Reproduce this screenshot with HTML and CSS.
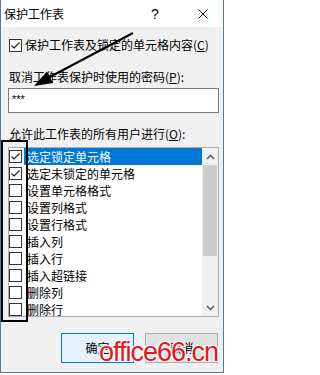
FILE: index.html
```html
<!DOCTYPE html>
<html lang="zh-CN">
<head>
<meta charset="utf-8">
<title>保护工作表</title>
<link rel="stylesheet" href="styles.css">
</head>
<body>
<div class="dialog">
  <div class="titlebar">
    <span class="title">保护工作表</span>
    <span class="tb-help">?</span>
    <span class="tb-close"><svg width="10" height="10" viewBox="0 0 10 10"><path d="M0.5 0.5 L9.5 9.5 M9.5 0.5 L0.5 9.5" stroke="#111" stroke-width="1" fill="none"/></svg></span>
  </div>
  <div class="body">
    <div class="check-row">
      <span class="cb"><svg width="11" height="11" viewBox="0 0 11 11"><path d="M1.5 5.5 L4 8 L9.5 2.5" stroke="#222" stroke-width="1.2" fill="none"/></svg></span>
      <span>保护工作表及锁定的单元格内容(<u>C</u>)</span>
    </div>
    <div class="label">取消工作表保护时使用的密码(<u>P</u>):</div>
    <div class="input">***</div>
    <div class="label label2">允许此工作表的所有用户进行(<u>O</u>):</div>
    <div class="list">
      <div class="items">
        <div class="item sel"><span class="cb"><svg width="11" height="11" viewBox="0 0 11 11"><path d="M1.5 5.5 L4 8 L9.5 2.5" stroke="#222" stroke-width="1.2" fill="none"/></svg></span><span class="txt">选定锁定单元格</span></div>
        <div class="item"><span class="cb"><svg width="11" height="11" viewBox="0 0 11 11"><path d="M1.5 5.5 L4 8 L9.5 2.5" stroke="#222" stroke-width="1.2" fill="none"/></svg></span><span class="txt">选定未锁定的单元格</span></div>
        <div class="item"><span class="cb"></span><span class="txt">设置单元格格式</span></div>
        <div class="item"><span class="cb"></span><span class="txt">设置列格式</span></div>
        <div class="item"><span class="cb"></span><span class="txt">设置行格式</span></div>
        <div class="item"><span class="cb"></span><span class="txt">插入列</span></div>
        <div class="item"><span class="cb"></span><span class="txt">插入行</span></div>
        <div class="item"><span class="cb"></span><span class="txt">插入超链接</span></div>
        <div class="item"><span class="cb"></span><span class="txt">删除列</span></div>
        <div class="item"><span class="cb"></span><span class="txt">删除行</span></div>
      </div>
      <div class="scrollbar">
        <div class="sb-btn"><svg width="9" height="6" viewBox="0 0 9 6"><path d="M1 5 L4.5 1.5 L8 5" stroke="#606060" stroke-width="1.6" fill="none"/></svg></div>
        <div class="sb-track"><div class="sb-thumb"></div></div>
        <div class="sb-btn"><svg width="9" height="6" viewBox="0 0 9 6"><path d="M1 1 L4.5 4.5 L8 1" stroke="#606060" stroke-width="1.6" fill="none"/></svg></div>
      </div>
    </div>
    <div class="buttons">
      <div class="btn btn-default">确定</div>
      <div class="btn">取消</div>
    </div>
  </div>
</div>
<div class="mark-rect"></div>
<svg class="arrow" width="226" height="375" viewBox="0 0 226 375">
  <line x1="133" y1="33" x2="46" y2="79" stroke="#000" stroke-width="2"/>
  <polygon points="34,86 47,71.5 53,83" fill="#000"/>
</svg>
<div class="watermark">office66.cn</div>
</body>
</html>
```
FILE: styles.css
```css
* { box-sizing: border-box; }
html, body {
  margin: 0;
  padding: 0;
  width: 226px;
  height: 375px;
  background: #ffffff;
  overflow: hidden;
}
body {
  position: relative;
  font-family: "Noto Sans CJK SC", "Noto Sans", sans-serif;
  font-size: 12px;
  color: #000;
}
.dialog {
  width: 224px;
  height: 373px;
  border: 1px solid #4f77a8;
  border-top: none;
  display: flex;
  flex-direction: column;
  background: #f0f0f0;
}
.titlebar {
  height: 27px;
  background: #ffffff;
  display: flex;
  align-items: center;
  padding-left: 3px;
}
.title { flex: 1; line-height: 16px; }
.tb-help {
  width: 20px;
  text-align: center;
  font-family: "Liberation Sans", sans-serif;
  font-size: 14px;
  line-height: 16px;
}
.tb-close {
  width: 20px;
  margin-left: 28px;
  margin-right: 10px;
  display: flex;
  justify-content: center;
}
.body {
  flex: 1;
  padding: 10px 4px 0 7px;
  display: flex;
  flex-direction: column;
}
.cb {
  width: 13px;
  height: 13px;
  border: 1px solid #333;
  background: #fff;
  display: flex;
  align-items: center;
  justify-content: center;
  flex: none;
}
.check-row {
  display: flex;
  align-items: center;
  gap: 3px;
  height: 16px;
  line-height: 16px;
  padding-left: 1px;
}
.label {
  margin-top: 16px;
  line-height: 16px;
  height: 16px;
  padding-left: 1px;
}
.input {
  margin-top: 3px;
  height: 25px;
  border: 1px solid #7a7a7a;
  background: #fff;
  padding-left: 3px;
  line-height: 21px;
  font-family: "Liberation Sans", sans-serif;
  font-size: 11px;
}
.label2 { margin-top: 13px; }
.list {
  margin-top: 5px;
  height: 170px;
  border: 1px solid #abadb3;
  background: #fff;
  display: flex;
}
.items { flex: 1; }
.item {
  height: 17px;
  display: flex;
  align-items: center;
}
.item .txt {
  flex: 1;
  margin-left: 2px;
  padding-left: 3px;
  line-height: 17px;
  height: 17px;
}
.item.sel .txt { background: #0078d7; color: #fff; }
.scrollbar {
  width: 16px;
  background: #f0f0f0;
  display: flex;
  flex-direction: column;
}
.sb-btn {
  height: 17px;
  display: flex;
  align-items: center;
  justify-content: center;
}
.sb-track { flex: 1; padding: 0 1px; }
.sb-thumb { height: 91px; background: #cdcdcd; }
.buttons {
  margin-top: 16px;
  display: flex;
  justify-content: flex-end;
  gap: 11px;
  padding-right: 1px;
}
.btn {
  width: 73px;
  height: 30px;
  border: 1px solid #adadad;
  background: #e1e1e1;
  text-align: center;
  line-height: 28px;
}
.btn-default { border-color: #0078d7; background: #e5f1fb; }
.mark-rect {
  position: absolute;
  left: 1px;
  top: 140px;
  width: 27px;
  height: 182px;
  border: 2px solid #000;
}
.arrow {
  position: absolute;
  left: 0;
  top: 0;
  pointer-events: none;
}
.watermark {
  position: absolute;
  left: 99px;
  top: 336px;
  font-family: "Liberation Sans", sans-serif;
  font-size: 27px;
  line-height: 32px;
  letter-spacing: -1px;
  color: #e8141b;
  text-shadow: 1px 0 0 #fff, -1px 0 0 #fff, 0 1px 0 #fff, 0 -1px 0 #fff, 1px 1px 0 #fff, -1px -1px 0 #fff, 1px -1px 0 #fff, -1px 1px 0 #fff;
}
```
